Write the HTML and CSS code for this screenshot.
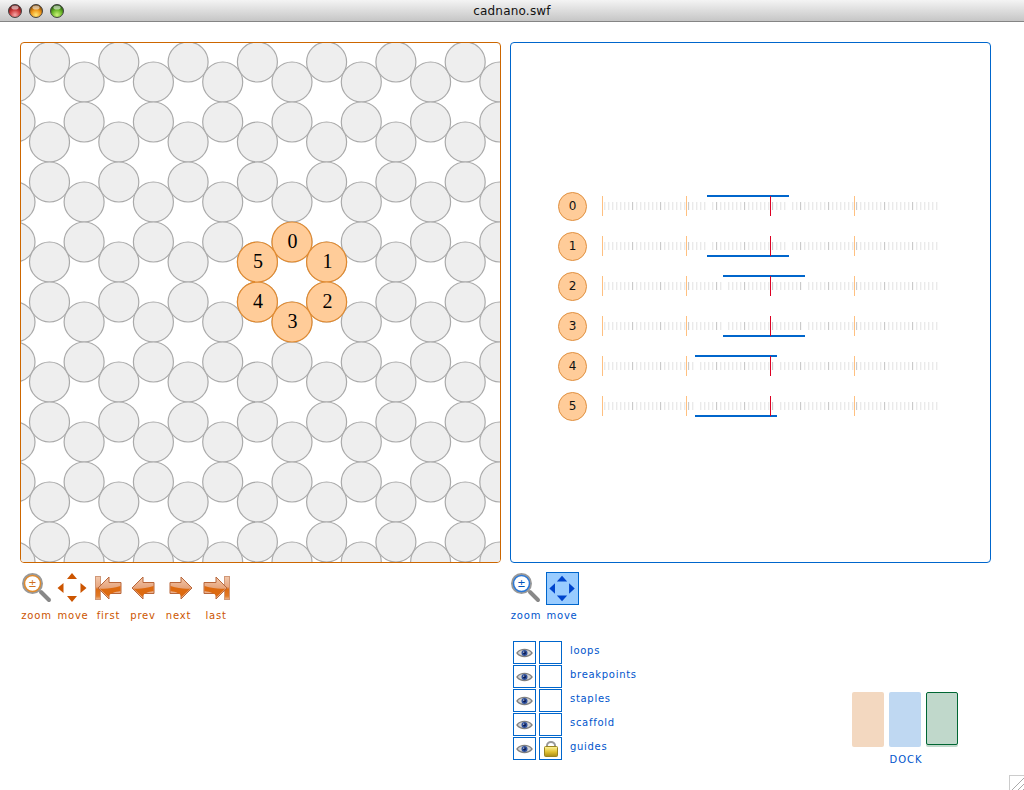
FILE: index.html
```html
<!DOCTYPE html>
<html lang="en">
<head>
<meta charset="utf-8">
<title>cadnano.swf</title>
<link rel="stylesheet" href="styles.css">
</head>
<body>
<svg class="defs" width="0" height="0" aria-hidden="true">
  <defs>
    <radialGradient id="red" cx="50%" cy="80%" r="70%"><stop offset="0" stop-color="#f6a8a8"/><stop offset=".55" stop-color="#cf3c3c"/><stop offset="1" stop-color="#6f1414"/></radialGradient>
    <radialGradient id="amber" cx="50%" cy="80%" r="70%"><stop offset="0" stop-color="#ffe878"/><stop offset=".55" stop-color="#f0981a"/><stop offset="1" stop-color="#7c4606"/></radialGradient>
    <radialGradient id="green" cx="50%" cy="80%" r="70%"><stop offset="0" stop-color="#ccf27a"/><stop offset=".55" stop-color="#6cb82a"/><stop offset="1" stop-color="#235a0a"/></radialGradient>
    <linearGradient id="arrowFill" x1="0" y1="0" x2="0" y2="1">
      <stop offset="0" stop-color="#f2c8ac"/><stop offset=".5" stop-color="#e6a47c"/><stop offset="1" stop-color="#f0bc9c"/>
    </linearGradient>
    <linearGradient id="barFill" x1="0" y1="0" x2="0" y2="1">
      <stop offset="0" stop-color="#f2c8ac"/><stop offset=".45" stop-color="#e8a882"/><stop offset=".55" stop-color="#dd6a12"/><stop offset=".85" stop-color="#e07a28"/><stop offset="1" stop-color="#eeb890"/>
    </linearGradient>
    <linearGradient id="gold" x1="0" y1="0" x2="0" y2="1"><stop offset="0" stop-color="#fff6a0"/><stop offset=".55" stop-color="#e0c030"/><stop offset="1" stop-color="#a88a18"/></linearGradient>
    <symbol id="arrow" viewBox="0 0 24 24"><path d="M1 12 12 1V6.500H23V17.500H12V23Z" fill="url(#arrowFill)" stroke="#b8663a"/><path d="M2.500 12.500C8 13 15 12.500 22.500 10V15C17 16 12.500 17 11.500 21Z" fill="#dd6a10"/></symbol>
    <symbol id="bar-arrow" viewBox="0 0 27 24"><rect x=".5" y=".5" width="5" height="23" fill="url(#barFill)" stroke="#d09878"/><path d="M3 12 14 1V6.500H26V17.500H14V23Z" fill="url(#arrowFill)" stroke="#b8663a"/><path d="M4.500 12.500C10 13 18 12.500 25.500 10V15C20 16 14.500 17 13.500 21Z" fill="#dd6a10"/></symbol>
    <symbol id="eye" viewBox="0 0 18 10"><path d="M1 5C5 0 13 0 17 5 13 10 5 10 1 5Z" fill="#d4d4d4" stroke="#808080" stroke-width="1.300"/><circle cx="9" cy="5" r="3.200" fill="#2c4f9c"/><circle cx="9" cy="5" r="1.500" fill="#0a1a50"/><circle cx="8.200" cy="4" r=".7" fill="#fff"/></symbol>
    <g id="col-a" class="lattice-col"><circle cy="62" r="20"/><circle cy="142" r="20"/><circle cy="182" r="20"/><circle cy="262" r="20"/><circle cy="302" r="20"/><circle cy="382" r="20"/><circle cy="422" r="20"/><circle cy="502" r="20"/><circle cy="542" r="20"/></g>
    <g id="col-b" class="lattice-col"><circle cy="82" r="20"/><circle cy="122" r="20"/><circle cy="202" r="20"/><circle cy="242" r="20"/><circle cy="322" r="20"/><circle cy="362" r="20"/><circle cy="442" r="20"/><circle cy="482" r="20"/><circle cy="562" r="20"/></g>
  </defs>
</svg>

<header class="titlebar">
  <div class="lights">
    <svg class="light" viewBox="0 0 14 14"><circle cx="7" cy="7" r="6.500" fill="url(#red)" stroke="#444"/><ellipse cx="7" cy="3.600" rx="3.600" ry="2" fill="#fff" opacity=".55"/></svg>
    <svg class="light" viewBox="0 0 14 14"><circle cx="7" cy="7" r="6.500" fill="url(#amber)" stroke="#444"/><ellipse cx="7" cy="3.600" rx="3.600" ry="2" fill="#fff" opacity=".55"/></svg>
    <svg class="light" viewBox="0 0 14 14"><circle cx="7" cy="7" r="6.500" fill="url(#green)" stroke="#444"/><ellipse cx="7" cy="3.600" rx="3.600" ry="2" fill="#fff" opacity=".55"/></svg>
  </div>
  <span class="title">cadnano.swf</span>
</header>

<main class="workspace">
  <section class="column">
    <div class="panel panel-orange">
      <svg class="lattice" viewBox="21 43 479 519" width="479" height="519">
        <g>
          <use href="#col-b" x="15"/><use href="#col-a" x="49.500"/><use href="#col-b" x="84.100"/><use href="#col-a" x="118.800"/><use href="#col-b" x="153.400"/><use href="#col-a" x="188.100"/><use href="#col-b" x="222.700"/><use href="#col-a" x="257.400"/><use href="#col-b" x="292"/><use href="#col-a" x="326.600"/><use href="#col-b" x="361.300"/><use href="#col-a" x="395.900"/><use href="#col-b" x="430.600"/><use href="#col-a" x="465.200"/><use href="#col-b" x="499.800"/>
        </g>
        <g class="active">
          <circle cx="292" cy="242" r="20"/><circle cx="326.600" cy="262" r="20"/><circle cx="326.600" cy="302" r="20"/><circle cx="292" cy="322" r="20"/><circle cx="257.400" cy="302" r="20"/><circle cx="257.400" cy="262" r="20"/>
          <text x="292.500" y="247.500">0</text><text x="327.500" y="267.500">1</text><text x="327.500" y="308">2</text><text x="292.500" y="328">3</text><text x="258" y="307.500">4</text><text x="258" y="268">5</text>
        </g>
      </svg>
    </div>
    <nav class="tools tools-left">
      <div class="tool tool-w37">
        <svg class="icon" width="32" height="33" viewBox="0 0 32 33"><path class="handle" d="M20 20 28 28"/><circle cx="11.500" cy="11.500" r="9" fill="#fff" stroke="#999" stroke-width="3"/><circle cx="11.500" cy="11.500" r="8" fill="#fff" stroke="#e08a2c" stroke-width="1.500"/><text class="plus plus-orange" x="11.500" y="15">±</text></svg>
        <span class="tool-label">zoom</span>
      </div>
      <div class="tool tool-w36">
        <svg class="icon" width="32" height="33" viewBox="0 0 32 33"><path fill="#cc5500" d="M15 1 20 7H10ZM15 30 10 24H20ZM.5 16 6.500 11V21ZM29.500 16 23.500 21V11Z"/></svg>
        <span class="tool-label">move</span>
      </div>
      <div class="tool tool-w35">
        <svg class="icon" width="27" height="33" viewBox="0 0 27 33"><use href="#bar-arrow" y="4" width="27" height="24"/></svg>
        <span class="tool-label">first</span>
      </div>
      <div class="tool tool-w34">
        <svg class="icon" width="24" height="33" viewBox="0 0 24 33"><use href="#arrow" y="4" width="24" height="24"/></svg>
        <span class="tool-label">prev</span>
      </div>
      <div class="tool tool-w37">
        <svg class="icon flip nudge" width="24" height="33" viewBox="0 0 24 33"><use href="#arrow" y="4" width="24" height="24"/></svg>
        <span class="tool-label">next</span>
      </div>
      <div class="tool tool-w38">
        <svg class="icon flip" width="27" height="33" viewBox="0 0 27 33"><use href="#bar-arrow" y="4" width="27" height="24"/></svg>
        <span class="tool-label">last</span>
      </div>
    </nav>
  </section>

  <section class="column">
    <div class="panel panel-blue">
      <div class="strands">
        <div class="strand">
          <span class="helix">0</span>
          <div class="track"><i class="gap" style="left:106px"></i><i class="gap" style="left:186px"></i><i class="line" style="left:105px;width:82px;top:-1px"></i><i class="mark"></i></div>
        </div>
        <div class="strand">
          <span class="helix">1</span>
          <div class="track"><i class="gap" style="left:106px"></i><i class="gap" style="left:186px"></i><i class="line" style="left:105px;width:82px;top:19px"></i><i class="mark"></i></div>
        </div>
        <div class="strand">
          <span class="helix">2</span>
          <div class="track"><i class="gap" style="left:122px"></i><i class="gap" style="left:202px"></i><i class="line" style="left:121px;width:82px;top:-1px"></i><i class="mark"></i></div>
        </div>
        <div class="strand">
          <span class="helix">3</span>
          <div class="track"><i class="gap" style="left:122px"></i><i class="gap" style="left:202px"></i><i class="line" style="left:121px;width:82px;top:19px"></i><i class="mark"></i></div>
        </div>
        <div class="strand">
          <span class="helix">4</span>
          <div class="track"><i class="gap" style="left:94px"></i><i class="gap" style="left:174px"></i><i class="line" style="left:93px;width:82px;top:-1px"></i><i class="mark"></i></div>
        </div>
        <div class="strand">
          <span class="helix">5</span>
          <div class="track"><i class="gap" style="left:94px"></i><i class="gap" style="left:174px"></i><i class="line" style="left:93px;width:82px;top:19px"></i><i class="mark"></i></div>
        </div>
      </div>
    </div>
    <nav class="tools tools-right">
      <div class="tool tool-w36">
        <svg class="icon" width="32" height="33" viewBox="0 0 32 33"><path class="handle" d="M20 20 28 28"/><circle cx="11.500" cy="11.500" r="9" fill="#fff" stroke="#999" stroke-width="3"/><circle cx="11.500" cy="11.500" r="8" fill="#fff" stroke="#2a78d8" stroke-width="1.500"/><text class="plus plus-blue" x="11.500" y="15">±</text></svg>
        <span class="tool-label tool-label-blue">zoom</span>
      </div>
      <div class="tool tool-w36">
        <svg class="icon move-on" width="33" height="33" viewBox="0 0 33 33"><path fill="#0044cc" d="M16 3 21.500 9H10.500ZM16 30 10.500 24H21.500ZM2.500 16.500 8.500 11V22ZM29.500 16.500 23.500 22V11Z"/></svg>
        <span class="tool-label tool-label-blue">move</span>
      </div>
    </nav>
    <div class="lower">
      <ul class="layers">
        <li class="layer"><span class="box"><svg class="eye" width="17" height="10"><use href="#eye"/></svg></span><span class="box"></span><span class="layer-name">loops</span></li>
        <li class="layer"><span class="box"><svg class="eye" width="17" height="10"><use href="#eye"/></svg></span><span class="box"></span><span class="layer-name">breakpoints</span></li>
        <li class="layer"><span class="box"><svg class="eye" width="17" height="10"><use href="#eye"/></svg></span><span class="box"></span><span class="layer-name">staples</span></li>
        <li class="layer"><span class="box"><svg class="eye" width="17" height="10"><use href="#eye"/></svg></span><span class="box"></span><span class="layer-name">scaffold</span></li>
        <li class="layer"><span class="box"><svg class="eye" width="17" height="10"><use href="#eye"/></svg></span><span class="box"><svg class="lock" width="16" height="16" viewBox="0 0 16 16"><path d="M4 6V4.500a4 3.500 0 0 1 8 0V6" fill="none" stroke="#999" stroke-width="2"/><rect x="1.500" y="5.500" width="13" height="10" rx="1" fill="url(#gold)" stroke="#9a8420"/></svg></span><span class="layer-name">guides</span></li>
      </ul>
      <div class="dock">
        <div class="swatches">
          <span class="swatch swatch-orange"></span>
          <span class="swatch swatch-blue"></span>
          <span class="swatch swatch-green"></span>
        </div>
        <span class="dock-label">DOCK</span>
      </div>
    </div>
  </section>
</main>
<div class="resize"></div>
</body>
</html>
```

FILE: styles.css
```css
* { box-sizing: border-box; }
html, body { margin: 0; padding: 0; }
body {
  width: 1024px;
  height: 790px;
  overflow: hidden;
  position: relative;
  background: #fff;
  font-family: "DejaVu Sans", sans-serif;
}
.defs { position: absolute; }

.titlebar {
  height: 22px;
  display: flex;
  align-items: center;
  position: relative;
  padding-left: 8px;
  background: linear-gradient(#f4f4f4, #e6e6e6 30%, #c6c6c6);
  border-bottom: 1px solid #858585;
}
.lights { display: flex; gap: 7px; }
.light { width: 14px; height: 14px; display: block; }
.title {
  position: absolute;
  left: 0;
  right: 0;
  text-align: center;
  font-size: 12px;
  letter-spacing: .2px;
  color: #111;
}

.workspace { display: flex; gap: 9px; padding: 20px 0 0 20px; }
.column { width: 481px; flex: none; }

.panel { height: 521px; border-radius: 4px; border: 1px solid; overflow: hidden; }
.panel-orange { border-color: #cc6600; }
.panel-blue { border-color: #0066cc; display: flex; align-items: center; }

.lattice { display: block; }
.lattice-col circle { fill: #eeeeee; stroke: #aaaaaa; stroke-width: 1.200; }
.active circle { fill: #ffcc99; stroke: #e08a30; stroke-width: 1.200; }
.active text {
  font-family: "Liberation Serif", serif;
  font-size: 20px;
  text-anchor: middle;
  fill: #000;
}

.strands { display: flex; flex-direction: column; gap: 12px; margin-top: 7px; padding-left: 47px; }
.strand { display: flex; align-items: center; height: 28px; }
.helix {
  width: 29px;
  height: 29px;
  flex: none;
  display: flex;
  align-items: center;
  justify-content: center;
  border-radius: 50%;
  background: #ffcc99;
  border: 1px solid #e09040;
  font-size: 12px;
  color: #111;
}
.track {
  position: relative;
  width: 336px;
  height: 20px;
  margin-left: 15px;
  background:
    linear-gradient(#ffc080, #ffc080) 0 0 / 1px 20px no-repeat,
    linear-gradient(#ffc080, #ffc080) 84px 0 / 1px 20px no-repeat,
    linear-gradient(#ffc080, #ffc080) 252px 0 / 1px 20px no-repeat,
    repeating-linear-gradient(90deg, #cacaca 0 1px, transparent 1px 28px) 30px 6px / 306px 8px no-repeat,
    repeating-linear-gradient(90deg, #eaeaea 0 1px, #f7f7f7 1px 2px, transparent 2px 4px) 2px 6px / 334px 8px no-repeat;
}
.gap { position: absolute; top: 4px; width: 3px; height: 12px; margin-left: -1px; background: #fff; }
.line { position: absolute; height: 2px; background: #0066cc; }
.mark { position: absolute; left: 168px; top: 0; width: 1px; height: 20px; background: #dd0022; }

.tools { display: flex; margin-top: 9px; height: 49px; }
.tools-left { margin-left: -2px; }
.tools-right { margin-left: -2px; }
.tool { display: flex; flex-direction: column; align-items: center; flex: none; }
.tool-w34 { width: 34px; }
.tool-w35 { width: 35px; }
.tool-w36 { width: 36px; }
.tool-w37 { width: 37px; }
.tool-w38 { width: 38px; }
.icon { display: block; flex: none; }
.flip { transform: scaleX(-1); }
.nudge { margin-left: 4px; }
.handle { stroke: #888; stroke-width: 4; stroke-linecap: round; fill: none; }
.plus { font-family: "DejaVu Sans", sans-serif; font-size: 10px; text-anchor: middle; }
.plus-orange { fill: #d07020; }
.plus-blue { fill: #0055bb; }
.move-on { background: #99ccff; border: 1px solid #0066cc; }
.tool-label {
  margin-top: 5px;
  font-size: 10px;
  line-height: 12px;
  letter-spacing: .8px;
  white-space: nowrap;
  color: #cc5500;
}
.tool-label-blue { color: #0055cc; }

.lower { display: flex; justify-content: space-between; margin-top: 20px; padding-left: 3px; }
.layers { list-style: none; margin: 0; padding: 0; display: flex; flex-direction: column; gap: 1px; }
.layer { display: flex; gap: 3px; height: 23px; }
.box {
  width: 23px;
  height: 23px;
  border: 1px solid #0066cc;
  display: flex;
  align-items: center;
  justify-content: center;
}
.eye { display: block; }
.lock { display: block; }
.layer-name {
  margin-left: 5px;
  font-size: 10px;
  line-height: 19px;
  letter-spacing: .7px;
  color: #0055cc;
}
.dock { display: flex; flex-direction: column; align-items: center; margin: 51px 33px 0 0; }
.swatches { display: flex; gap: 5px; }
.swatch { width: 32px; height: 55px; border-radius: 2px; display: block; }
.swatch-orange { background: #f3d8c0; }
.swatch-blue { background: #bfd8f2; }
.swatch-green { background: #c0d8cb; border: 1px solid #006633; height: 53px; box-shadow: 0 2px 0 #c0d8cb; }
.dock-label { margin-top: 7px; padding-left: 2px; font-size: 10px; line-height: 12px; letter-spacing: 1px; color: #0055cc; }

.resize {
  position: absolute;
  right: 0;
  bottom: 0;
  width: 15px;
  height: 15px;
  border-top: 1px solid #ccc;
  border-left: 1px solid #ccc;
  background:
    linear-gradient(135deg, #fff 50%, transparent 50%),
    repeating-linear-gradient(135deg, #fff 0 3px, #aaa 3px 4px);
}
```
